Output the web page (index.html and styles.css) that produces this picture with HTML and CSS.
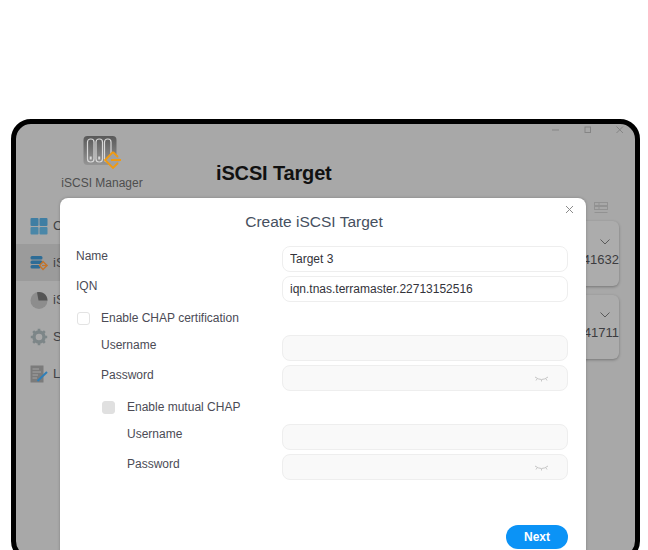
FILE: index.html
```html
<!DOCTYPE html>
<html lang="en">
<head>
  <meta charset="UTF-8">
  <meta name="viewport" content="width=device-width, initial-scale=1.0">
  <title>iSCSI Manager</title>
  <link rel="stylesheet" href="styles.css">
</head>
<body>
  <div class="frame">
    <aside class="sidebar">
      <div class="brand">
        <svg class="brand-icon" width="40" height="36" viewBox="0 0 40 36">
          <defs>
            <linearGradient id="tile" x1="0" y1="0" x2="0" y2="1">
              <stop offset="0" stop-color="#595959"/>
              <stop offset="1" stop-color="#959595"/>
            </linearGradient>
          </defs>
          <rect x="0.5" y="1" width="33" height="29" rx="4" fill="url(#tile)"/>
          <g fill="none" stroke="#d8d8d8" stroke-width="1.2">
            <rect x="4.5" y="4" width="6.5" height="23" rx="3"/>
            <rect x="13" y="4" width="6.5" height="23" rx="3"/>
            <rect x="21.5" y="4" width="6.5" height="23" rx="3"/>
          </g>
          <g fill="#d8d8d8">
            <rect x="6.7" y="21.5" width="2" height="3"/>
            <rect x="15.2" y="21.5" width="2" height="3"/>
          </g>
          <path d="M30 17 L22 25 L30 33 L38 25 Z" fill="#a0a0a0"/>
          <path d="M30 17 L22 25 L30 33 L35 28 M30 17 L35 22 M28 25 H38" fill="none" stroke="#f09a10" stroke-width="1.8"/>
        </svg>
        <div class="brand-name">iSCSI Manager</div>
      </div>
      <nav>
        <div class="nav-item">
          <svg width="18" height="18" viewBox="0 0 18 18">
            <rect x="0.5" y="1" width="8" height="8" rx="1" fill="#3f7ea3"/>
            <rect x="9.5" y="1" width="8" height="8" rx="1" fill="#3f7ea3"/>
            <rect x="0.5" y="10" width="8" height="7.5" rx="1" fill="#4a87a8"/>
            <rect x="9.5" y="10" width="8" height="7.5" rx="1" fill="#4a87a8"/>
          </svg>
          <span>C</span>
        </div>
        <div class="nav-item active">
          <svg width="18" height="18" viewBox="0 0 18 18">
            <rect x="0.5" y="2" width="12" height="3.5" rx="1.5" fill="#2d6c96"/>
            <rect x="0.5" y="6.5" width="12" height="3.5" rx="1.5" fill="#2d6c96"/>
            <rect x="0.5" y="11" width="10" height="3.5" rx="1.5" fill="#2d6c96"/>
            <path d="M13 7.5 L9.5 11.5 L13 15.5 L17 11.5 Z" fill="none" stroke="#c4742a" stroke-width="1.4"/>
            <path d="M12 11.5 H17.5" stroke="#c4742a" stroke-width="1.2"/>
          </svg>
          <span>iS</span>
        </div>
        <div class="nav-item">
          <svg width="18" height="18" viewBox="0 0 18 18">
            <circle cx="9" cy="9.5" r="8.5" fill="#8d8d8d"/>
            <path d="M7 1.2 A8.5 8.5 0 0 1 17.5 9.5 H8.5 Z" fill="#555"/>
          </svg>
          <span>iS</span>
        </div>
        <div class="nav-item">
          <svg width="18" height="18" viewBox="0 0 18 18">
            <circle cx="9" cy="9" r="5" fill="none" stroke="#7d8688" stroke-width="3.4"/>
            <path d="M9 .8 V3.5 M9 14.5 V17.2 M.8 9 H3.5 M14.5 9 H17.2 M3.2 3.2 L5 5 M13 13 L14.8 14.8 M14.8 3.2 L13 5 M5 13 L3.2 14.8" stroke="#7d8688" stroke-width="2.6"/>
          </svg>
          <span>S</span>
        </div>
        <div class="nav-item">
          <svg width="18" height="18" viewBox="0 0 18 18">
            <rect x="0.5" y="0.5" width="13" height="17" fill="#7b7b7b"/>
            <path d="M2.5 4 H9 M2.5 7 H11 M2.5 10 H8 M2.5 13 H7" stroke="#a5a5a5" stroke-width="1"/>
            <path d="M7.5 16 L17 7" stroke="#2f7fb8" stroke-width="2"/>
          </svg>
          <span>L</span>
        </div>
      </nav>
    </aside>

    <main class="content">
      <div class="window-controls">
        <svg width="10" height="10" viewBox="0 0 10 10"><path d="M1 5 H8" stroke="#858585"/></svg>
        <svg width="10" height="10" viewBox="0 0 10 10"><rect x="2" y="2" width="5.5" height="5.5" fill="none" stroke="#858585"/></svg>
        <svg width="10" height="10" viewBox="0 0 10 10"><path d="M1.5 1.5 L8 8 M8 1.5 L1.5 8" stroke="#858585"/></svg>
      </div>
      <h1>iSCSI Target</h1>
      <div class="toolbar">
        <svg width="14" height="12" viewBox="0 0 14 12" fill="none" stroke="#929292">
          <rect x="0.5" y="0.5" width="13" height="3"/>
          <rect x="0.5" y="4.5" width="13" height="3"/>
          <path d="M0.5 10.5 H13.5 M5 0.5 V7.5"/>
        </svg>
      </div>
      <section class="target-card">
        <svg class="chevron" width="10" height="6" viewBox="0 0 10 6"><path d="M.5 .5 L5 5 L9.5 .5" fill="none" stroke="#5a5a5a"/></svg>
        <span>41632</span>
      </section>
      <section class="target-card">
        <svg class="chevron" width="10" height="6" viewBox="0 0 10 6"><path d="M.5 .5 L5 5 L9.5 .5" fill="none" stroke="#5a5a5a"/></svg>
        <span>41711</span>
      </section>
    </main>

    <div class="dialog">
      <svg class="dialog-close" width="9" height="9" viewBox="0 0 9 9"><path d="M1 1 L8 8 M8 1 L1 8" stroke="#8b8b8b"/></svg>
      <h2>Create iSCSI Target</h2>
      <form class="form">
        <div class="row">
          <label>Name</label>
          <input class="field" type="text" value="Target 3">
        </div>
        <div class="row">
          <label>IQN</label>
          <input class="field" type="text" value="iqn.tnas.terramaster.22713152516">
        </div>
        <div class="check-row">
          <span class="check"></span>
          <label>Enable CHAP certification</label>
        </div>
        <div class="group">
          <div class="row">
            <label>Username</label>
            <div class="field off"></div>
          </div>
          <div class="row">
            <label>Password</label>
            <div class="field off">
              <svg class="eye" width="15" height="6" viewBox="0 0 15 6"><path d="M1 1 Q7.5 6 14 1 M3 3 L2 4.5 M12 3 L13 4.5 M7.5 4 V5.5" fill="none" stroke="#c6c6c6"/></svg>
            </div>
          </div>
          <div class="check-row mutual">
            <span class="check on"></span>
            <label>Enable mutual CHAP</label>
          </div>
          <div class="group inner">
            <div class="row">
              <label>Username</label>
              <div class="field off"></div>
            </div>
            <div class="row">
              <label>Password</label>
              <div class="field off">
                <svg class="eye" width="15" height="6" viewBox="0 0 15 6"><path d="M1 1 Q7.5 6 14 1 M3 3 L2 4.5 M12 3 L13 4.5 M7.5 4 V5.5" fill="none" stroke="#c6c6c6"/></svg>
              </div>
            </div>
          </div>
        </div>
        <div class="actions">
          <button type="button" class="next">Next</button>
        </div>
      </form>
    </div>
  </div>
</body>
</html>
```

FILE: styles.css
```css
html, body {
  height: 550px;
  overflow: hidden;
}

body {
  margin: 0;
  background: #fff;
  font-family: "Liberation Sans", Arial, sans-serif;
  color: #4b4b55;
}

.frame {
  position: relative;
  display: flex;
  box-sizing: border-box;
  width: 629px;
  height: 442px;
  margin: 119px 0 0 11px;
  border: 5px solid #000;
  border-radius: 20px;
  background: #a8a8a8;
  overflow: hidden;
}

/* sidebar */
.sidebar {
  width: 172px;
  flex-shrink: 0;
}

.brand {
  height: 83px;
  padding-top: 11px;
  box-sizing: border-box;
  text-align: center;
}

.brand-icon {
  display: block;
  margin: 0 0 0 67px;
}

.brand-name {
  margin-top: 5px;
  font-size: 12px;
  color: #4e4e4e;
}

.nav-item {
  display: flex;
  align-items: center;
  gap: 5px;
  height: 37px;
  padding-left: 14px;
  font-size: 13px;
  color: #3f4145;
}

.nav-item.active {
  background: #9b9b9b;
}

/* main area behind the dialog */
.content {
  flex: 1;
  min-width: 0;
  padding-right: 10px;
}

.window-controls {
  display: flex;
  justify-content: flex-end;
  gap: 22px;
  height: 19px;
  padding-top: 1px;
}

h1 {
  margin: 17px 0 0 28px;
  font-size: 20px;
  line-height: 24px;
  font-weight: 700;
  letter-spacing: -0.15px;
  color: #111;
}

.toolbar {
  display: flex;
  justify-content: flex-end;
  height: 10px;
  margin-top: 17px;
  padding-right: 17px;
}

.target-card {
  display: flex;
  flex-direction: column;
  align-items: flex-end;
  box-sizing: border-box;
  height: 65px;
  margin: 9px 6px 0 0;
  padding-top: 18px;
  border-radius: 6px;
  background: #acacac;
  box-shadow: 0 1px 3px rgba(0, 0, 0, 0.3);
  font-size: 13px;
  color: #3c3c40;
}

.target-card + .target-card {
  height: 64px;
  padding-top: 17px;
}

.chevron {
  margin: 0 9px 7px 0;
}

/* dialog */
.dialog {
  position: absolute;
  left: 44px;
  top: 74px;
  width: 526px;
  height: 400px;
  border-radius: 8px;
  background: #fff;
  box-shadow: 0 0 3px rgba(0, 0, 0, 0.25);
}

.dialog-close {
  position: absolute;
  top: 7px;
  right: 12px;
}

h2 {
  margin: 0;
  padding: 15px 18px 0 0;
  font-size: 15.5px;
  line-height: 18px;
  font-weight: 400;
  text-align: center;
  color: #465060;
}

.form {
  padding: 15px 18px 0 16px;
}

.row {
  display: flex;
  justify-content: space-between;
  margin-bottom: 4px;
}

.row label {
  font-size: 12px;
  line-height: 20px;
}

.field {
  position: relative;
  box-sizing: border-box;
  width: 286px;
  height: 26px;
  padding: 0 7px;
  border: 1px solid #eee;
  border-radius: 8px;
  background: #fff;
  font: 12px "Liberation Sans", Arial, sans-serif;
  color: #33333a;
  outline: none;
}

.field.off {
  background: #f9f9f9;
}

.eye {
  position: absolute;
  right: 18px;
  top: 10px;
}

.check-row {
  display: flex;
  align-items: center;
  gap: 11px;
  box-sizing: border-box;
  height: 29px;
  padding: 0 0 5px 1px;
  font-size: 12px;
}

.check {
  box-sizing: border-box;
  width: 13px;
  height: 13px;
  border: 1px solid #e3e3e3;
  border-radius: 3px;
  background: #fff;
}

.check.on {
  border-color: #e0e0e0;
  background: #e0e0e0;
}

.group {
  padding-left: 25px;
}

.group.inner {
  padding-left: 26px;
}

.mutual {
  gap: 12px;
}

.actions {
  display: flex;
  justify-content: flex-end;
  margin-top: 45px;
}

.next {
  width: 62px;
  height: 24px;
  border: 0;
  border-radius: 12px;
  background: #0b93f6;
  color: #fff;
  font: 700 12px "Liberation Sans", Arial, sans-serif;
}
```
